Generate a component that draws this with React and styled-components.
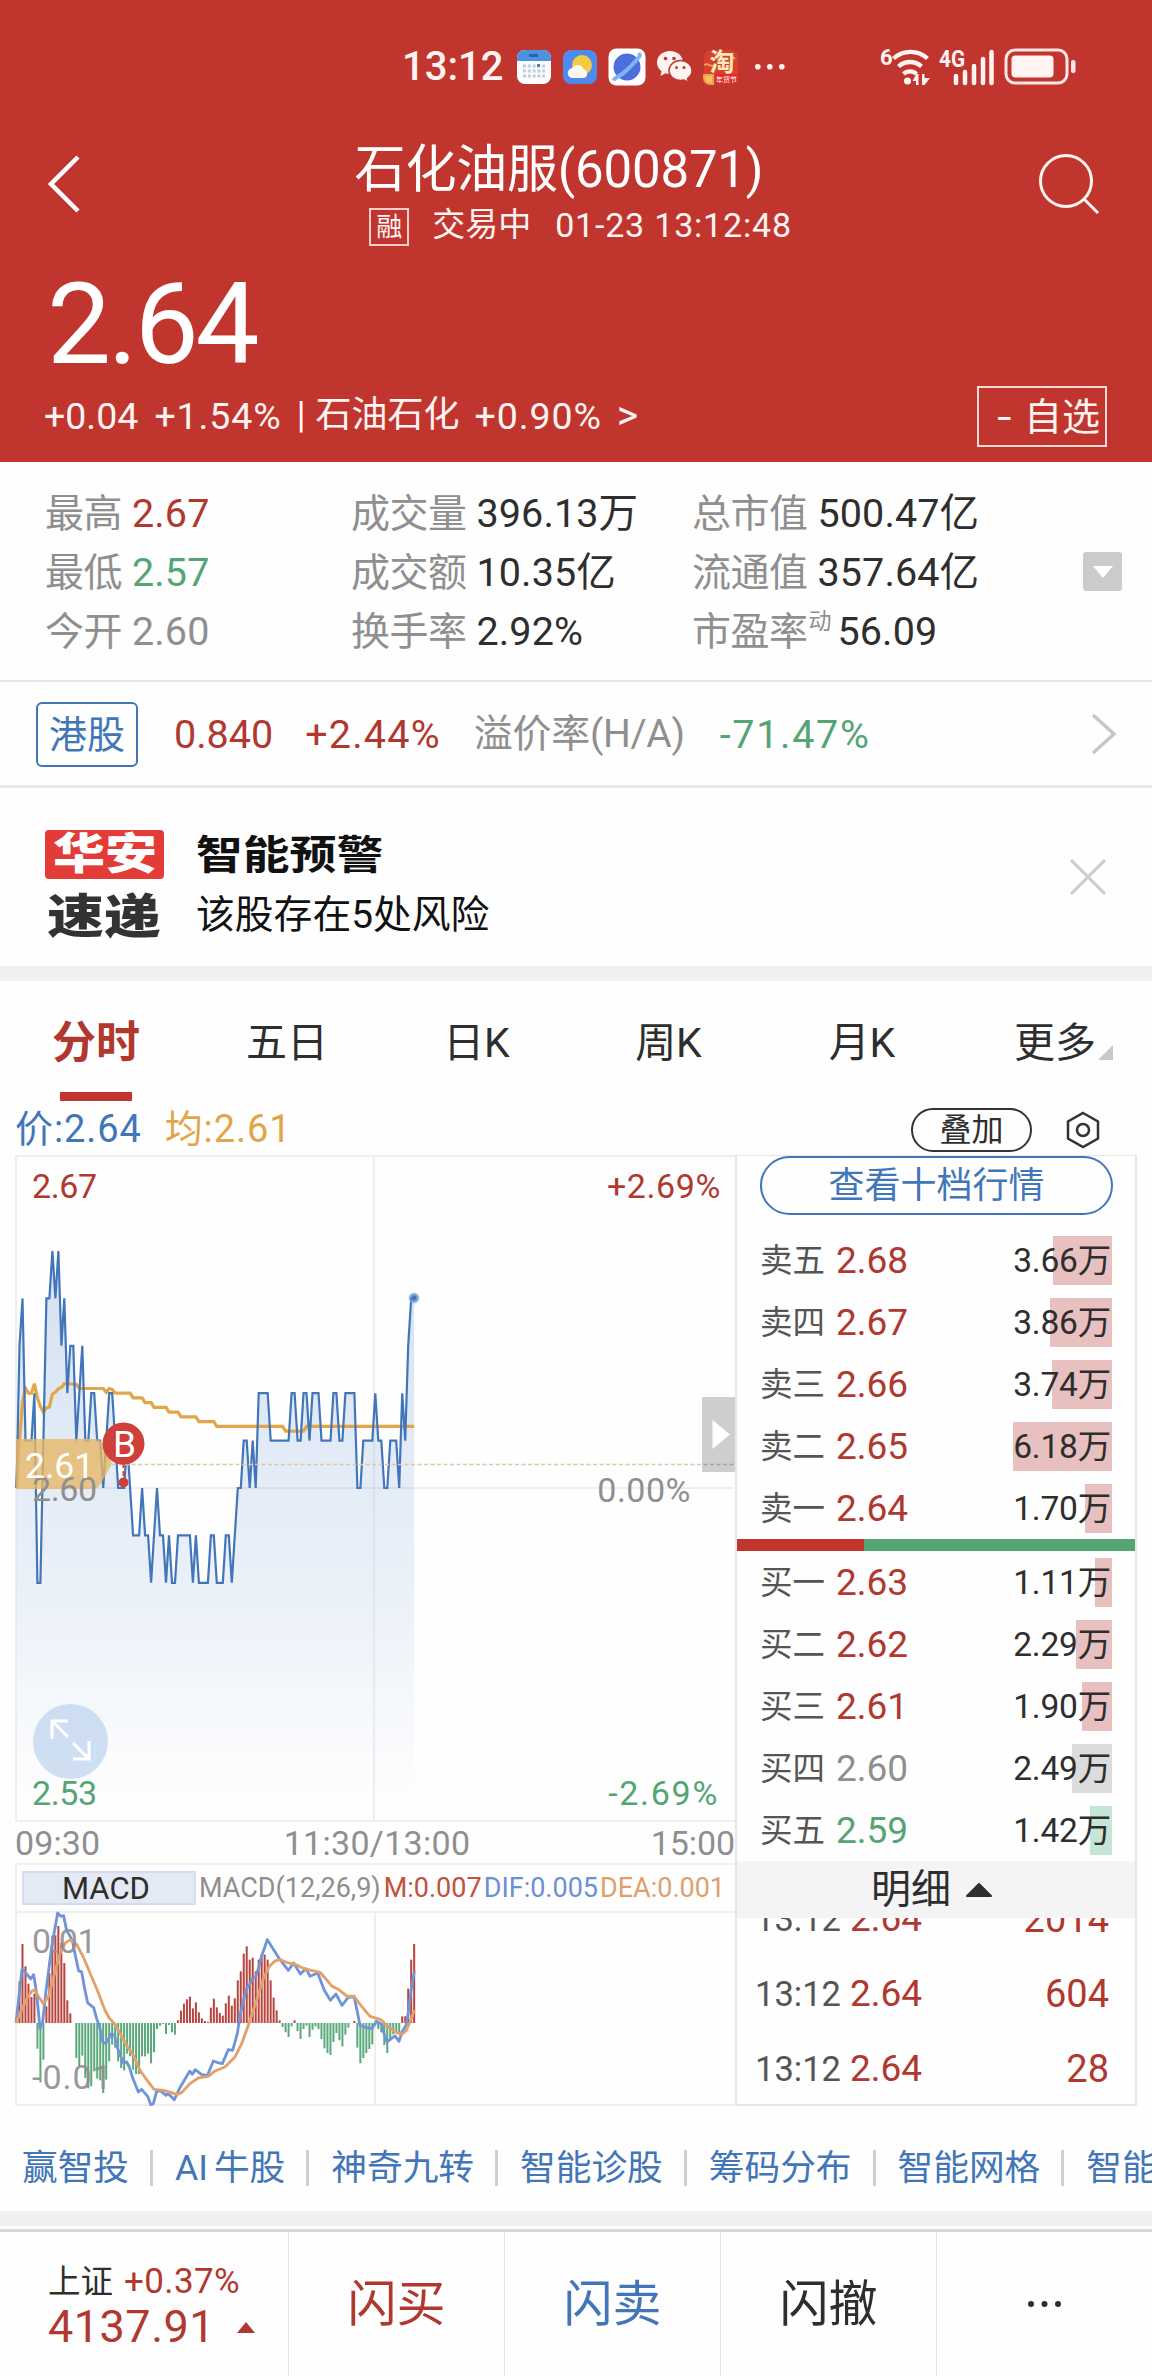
import React from 'react';
import styled, { createGlobalStyle } from 'styled-components';

const RED = '#c0362f';
const UP = '#b0382f';
const GREEN = '#54a474';
const BLUE = '#4276b8';
const GOLD = '#e2a548';
const GREY = '#8f8f8f';
const INK = '#2e2e2e';
const LINE = '#e6e6e6';

const Global = createGlobalStyle`
  * { box-sizing: border-box; }
  body { margin: 0; background: #fefefe; }
`;

const Screen = styled.div`
  width: 1152px;
  height: 2376px;
  overflow: hidden;
  display: flex;
  flex-direction: column;
  background: #fefefe;
  color: ${INK};
  font-family: Roboto, "Noto Sans CJK SC", sans-serif;
  white-space: nowrap;
  svg { display: block; flex: none; overflow: visible; }
`;

const T = styled.span`
  display: inline-block;
  flex: none;
  font-size: ${p => p.$s || 39}px;
  line-height: 1.2;
  color: ${p => p.$c || 'inherit'};
  letter-spacing: ${p => p.$ls || 0}px;
  font-weight: ${p => p.$w || 400};
  margin-left: ${p => p.$ml || 0}px;
`;

/* ---------- header ---------- */
const Header = styled.header`
  height: 462px;
  flex: none;
  background: ${RED};
  color: #fff4f2;
  display: flex;
  flex-direction: column;
`;
const StatusBar = styled.div`
  height: 132px;
  padding: 2px 76px 0 402px;
  display: flex;
  align-items: center;
`;
const AppIcons = styled.div`
  display: flex;
  align-items: center;
  gap: 10px;
  margin-left: 13px;
`;
const Signals = styled.div`
  display: flex;
  align-items: center;
  margin-left: auto;
  gap: 9px;
`;
const TitleBar = styled.div`
  height: 124px;
  padding: 0 52px 0 47px;
  display: flex;
  justify-content: space-between;
  align-items: flex-start;
`;
const BackBox = styled.div`padding-top: 23px;`;
const SearchBox = styled.div`padding-top: 21px;`;
const TitleBlock = styled.div`
  display: flex;
  flex-direction: column;
  align-items: center;
  padding-left: 15px;
`;
const TitleText = styled.div`
  font-size: 51px;
  line-height: 60px;
  padding-top: 8px;
  letter-spacing: -0.2px;
  color: #fff;
  margin-right: 15px;
`;
const SubTitle = styled.div`
  display: flex;
  align-items: center;
  height: 40px;
  margin-top: 5px;
  padding-left: 28px;
`;
const MarginTag = styled.span`
  width: 40px;
  height: 38px;
  border: 2px solid #f6cfcb;
  font-size: 26px;
  line-height: 34px;
  text-align: center;
  margin-right: 23px;
  margin-top: 4px;
`;
const BigPrice = styled.div`
  height: 118px;
  padding-left: 47px;
  padding-top: 11px;
  font-size: 114px;
  line-height: 114px;
  letter-spacing: -3.2px;
  color: #fff;
`;
const ChangeRow = styled.div`
  height: 88px;
  padding: 0 45px 0 44px;
  display: flex;
  align-items: center;
  margin-top: -2px;
`;
const WatchButton = styled.button`
  margin-left: auto;
  width: 130px;
  height: 61px;
  border: 2px solid #f6d9d6;
  border-radius: 0;
  background: none;
  color: inherit;
  font: 38px/1 Roboto, "Noto Sans CJK SC", sans-serif;
  display: flex;
  align-items: center;
  justify-content: flex-end;
  gap: 14px;
  padding: 2px 5px 0 0;
`;
const Dash = styled.span`
  display: inline-block;
  transform: scaleX(1.35);
`;

/* ---------- quote statistics ---------- */
const Stats = styled.section`
  height: 220px;
  flex: none;
  padding: 22px 30px 0 45px;
  border-bottom: 2px solid ${LINE};
  display: grid;
  grid-template-columns: 306px 341px 1fr 39px;
`;
const StatColumn = styled.div`
  display: flex;
  flex-direction: column;
`;
const Stat = styled.div`
  display: flex;
  height: 59px;
  align-items: center;
  gap: 10px;
  font-size: 39px;
  line-height: 48px;
  color: ${GREY};
`;
const StatLabel = styled.span`letter-spacing: -0.5px;`;
const Sup = styled.span`
  font-size: 23px;
  margin: -20px -4px 0 -9px;
`;
const StatValue = styled.span`
  font-size: 39.5px;
  letter-spacing: 0.1px;
  color: ${p => p.$c || INK};
`;
const Toggle = styled.div`
  width: 39px;
  height: 39px;
  margin-top: 68px;
  border-radius: 3px;
  background: #cbcbcb;
  display: grid;
  place-items: center;
`;

const HkRow = styled.section`
  height: 106px;
  flex: none;
  padding: 1px 35px 0 36px;
  border-bottom: 3px solid ${LINE};
  display: flex;
  align-items: center;
`;
const HkTag = styled.span`
  width: 102px;
  height: 65px;
  border: 2px solid ${BLUE};
  border-radius: 6px;
  color: ${BLUE};
  font-size: 38px;
  line-height: 63px;
  text-align: center;
`;
const HkText = styled(T)`padding-top: 1px;`;
const Push = styled.div`margin-left: auto;`;

/* ---------- alert ---------- */
const Alert = styled.section`
  height: 178px;
  flex: none;
  display: flex;
  padding: 42px 46px 0 45px;
`;
const AlertLogo = styled.div`
  width: 119px;
  display: flex;
  flex-direction: column;
  align-items: center;
`;
const LogoTop = styled.div`
  width: 119px;
  height: 49px;
  border-radius: 4px;
  background: #e23b38;
  color: #fff;
  display: grid;
  place-items: center;
  font-size: 46px;
  line-height: 49px;
  font-weight: 900;
`;
const LogoBottom = styled.div`
  color: #333;
  font-size: 48px;
  line-height: 60px;
  margin-top: 8px;
  font-weight: 900;
`;
const Wide = styled.span`
  display: inline-block;
  transform: scaleX(${p => p.$x}) scaleY(${p => p.$y || 1});
  transform-origin: ${p => p.$o || 'center'};
`;
const AlertText = styled.div`
  margin-left: 32px;
  display: flex;
  flex-direction: column;
  color: #111;
`;
const AlertTitle = styled.div`
  font-size: 40px;
  line-height: 50px;
  font-weight: 700;
  padding-top: 1px;
`;
const AlertBody = styled.div`
  font-size: 38.8px;
  line-height: 50px;
  margin-top: 9px;
`;
const CloseBox = styled.div`margin: 29px 0 0 auto;`;

const Band = styled.div`
  height: 15px;
  flex: none;
  background: #f0f0f0;
`;

/* ---------- tabs ---------- */
const Tabs = styled.nav`
  height: 120px;
  flex: none;
  display: grid;
  grid-template-columns: repeat(6, 192px);
`;
const Tab = styled.div`
  display: flex;
  flex-direction: column;
  align-items: center;
  font-size: ${p => (p.$on ? 44 : 41)}px;
  font-weight: ${p => (p.$on ? 700 : 400)};
  color: ${p => (p.$on ? UP : INK)};
  line-height: 60px;
  padding: 32px ${p => (p.$on ? 0 : p.$shift || 2)}px 0 0;
`;
const TabLabel = styled.span`
  display: flex;
  align-items: flex-end;
`;
const Underline = styled.i`
  width: 72px;
  height: 9px;
  margin-top: 19px;
  background: ${RED};
`;
const Corner = styled.i`
  margin: 0 -17px 13px 2px;
  border-left: 15px solid transparent;
  border-bottom: 15px solid #c8c8c8;
`;

/* ---------- chart area ---------- */
const Legend = styled.div`
  height: 54px;
  flex: none;
  padding: 3px 52px 0 15px;
  display: flex;
  align-items: center;
`;
const OverlayButton = styled.span`
  margin-left: auto;
  width: 121px;
  height: 44px;
  border: 2px solid #333;
  border-radius: 22px;
  font-size: 32px;
  line-height: 41px;
  text-align: center;
  margin-right: 34px;
`;
const Market = styled.section`
  height: 951px;
  flex: none;
  padding: 0 15px;
  display: grid;
  grid-template-columns: 720px 402px;
`;
const Charts = styled.div`
  display: flex;
  flex-direction: column;
`;
const Axis = styled.div`
  height: 40px;
  display: flex;
  align-items: center;
  justify-content: space-between;
  color: ${GREY};
`;
const MacdBar = styled.div`
  height: 48px;
  border-top: 2px solid #f0f0f0;
  border-left: 2px solid #f0f0f0;
  display: flex;
  align-items: center;
  padding-left: 5px;
`;
const MacdTag = styled.span`
  width: 174px;
  height: 34px;
  border: 2px solid #d2dcf5;
  background: #e4e9f4;
  font-size: 31px;
  line-height: 31px;
  text-align: center;
  padding-right: 6px;
`;

const Book = styled.div`
  height: 951px;
  border: 2px solid ${LINE};
  border-top-width: 1px;
  display: flex;
  flex-direction: column;
  overflow: hidden;
`;
const DepthButton = styled.div`
  flex: none;
  width: 353px;
  height: 59px;
  margin: 0 0 14px 23px;
  border: 2px solid ${BLUE};
  border-radius: 30px;
  color: ${BLUE};
  font-size: 36px;
  line-height: 57px;
  text-align: center;
`;
const BookRow = styled.div`
  flex: none;
  height: 62px;
  padding: 0 23px;
  display: flex;
  align-items: center;
`;
const RowText = styled(T)`padding-top: 2px;`;
const Volume = styled.span`
  margin-left: auto;
  height: 49px;
  padding-right: 1px;
  line-height: 49px;
  font-size: 33.5px;
  letter-spacing: -0.2px;
  background: linear-gradient(${p => p.$c}, ${p => p.$c}) right / ${p => p.$bar}px 100% no-repeat;
  min-width: 99px;
  text-align: right;
`;
const Split = styled.div`
  flex: none;
  height: 12px;
  background: linear-gradient(90deg, ${RED} 127px, ${GREEN} 127px);
`;
const DetailBar = styled.div`
  flex: none;
  height: 57px;
  background: #f4f4f4;
  display: flex;
  align-items: center;
  justify-content: center;
  gap: 14px;
  padding-right: 8px;
`;
const Trades = styled.div`
  flex: 1;
  overflow: hidden;
  display: flex;
  flex-direction: column;
  justify-content: flex-end;
`;
const Trade = styled.div`
  flex: none;
  height: 75px;
  padding: 0 26px 0 18px;
  display: flex;
  align-items: center;
  &:last-child { margin-bottom: -3px; }
`;

/* ---------- shortcuts and bottom bar ---------- */
const Shortcuts = styled.nav`
  height: 105px;
  flex: none;
  padding-top: 18px;
  padding-left: 22px;
  display: flex;
  align-items: center;
  overflow: hidden;
`;
const Shortcut = styled.span`
  flex: none;
  color: ${BLUE};
  font-size: 35.7px;
  line-height: 44px;
  word-spacing: -3px;
  display: flex;
  align-items: center;
  &:not(:last-child)::after {
    content: '';
    width: 3px;
    height: 36px;
    margin: 0 22px 0 21px;
    background: #cfcfcf;
  }
`;
const BottomBar = styled.footer`
  height: 147px;
  flex: none;
  margin-top: 3px;
  border-top: 3px solid #d5d5d5;
  display: grid;
  grid-template-columns: 289px 216px 216px 216px 215px;
`;
const Cell = styled.div`
  border-right: ${p => (p.$last ? 0 : 1)}px solid #e4e4e4;
  display: grid;
  place-items: center;
  font-size: 49px;
  line-height: 60px;
  padding: ${p => (p.$last ? 0 : 2)}px 0 0;
  color: ${p => p.$c || INK};
`;
const IndexCell = styled.div`
  border-right: 1px solid #e4e4e4;
  padding: 28px 0 0 48px;
`;
const IndexLine = styled.div`
  display: flex;
  align-items: center;
  height: ${p => p.$h}px;
`;

/* ---------- chart data: minute series ---------- */
const PRICES = [
  0, 3, 4, 1, 1, 1, 2, -2, -2, 1, 4, 4, 5, 4, 5, 3, 4, 2, 3, 3, 1, 2, 3, 1, 1, 2, 2, 1, 1, 0,
  1, 2, 2, 1, 0, 0, 0, 1, 0, -1, -1, -1, 0, -1, -1, -2, -1, 0, -1, -1, -2, -1, -2, -2, -1, -1, -1, -1, -1, -2,
  -1, -2, -2, -2, -2, -1, -1, -2, -2, -2, -1, -1, -2, -1, 0, 0, 1, 1, 0, 1, 0, 2, 2, 2, 2, 1, 1, 1, 1, 1,
  1, 1, 2, 2, 1, 1, 2, 2, 1, 2, 2, 2, 1, 1, 1, 1, 2, 2, 1, 1, 2, 2, 2, 2, 0, 0, 1, 1, 1, 1,
  2, 1, 1, 0, 0, 1, 1, 1, 0, 2, 1, 3, 4, 4,
];
const AVERAGE = [
  [0, 0], [1, 1], [2, 1.8], [3, 2.1], [4, 2], [5, 2], [6, 2.2], [7, 1.9], [8, 1.72], [9, 1.6], [10, 1.69], [11, 1.71],
  [12, 1.98], [13, 2.02], [14, 2.09], [15, 2.12], [16, 2.2], [20, 2.19], [21, 2.1], [29, 2.1], [30, 2.02], [31, 2.1],
  [32, 2.08], [33, 2], [38, 2], [39, 1.9], [42, 1.9], [43, 1.8], [45, 1.8], [46, 1.7], [50, 1.7], [51, 1.6], [54, 1.6],
  [55, 1.5], [60, 1.5], [61, 1.4], [66, 1.4], [67, 1.3], [89, 1.3], [90, 1.2], [96, 1.2], [97, 1.3], [133, 1.3],
];
const BARS = [
  0, 125, 237, 170, 118, 78, 88, -77, -178, -110, 50, 150, 262, 263, 291, 240, 180, 68, 29, 0,
  -105, -130, -98, -165, -196, -190, -145, -167, -172, -210, -170, -115, -65, -74, -115, -135, -142, -92, -100, -140,
  -153, -153, -100, -100, -92, -121, -88, -18, -8, -3, -33, -6, -28, -35, 8, 37, 58, 71, 79, 44,
  62, 32, 14, 6, 3, 46, 73, 47, 30, 22, 59, 82, 52, 74, 128, 155, 208, 230, 190, 196,
  155, 190, 205, 205, 190, 128, 76, 38, 8, -12, -28, -42, -10, 8, -24, -48, -18, -8, -42, -20,
  -10, -18, -48, -76, -90, -96, -57, -30, -52, -70, -35, -14, 0, 6, -74, -121, -105, -90, -78, -64,
  -8, -18, -28, -66, -90, -52, -34, -26, -30, 20, 20, 103, 190, 237,
];
const DIF = '48,398 66,237 79,250 92,266 101,253 110,310 120,415 128,395 137,310 155,170 173,68 182,78 191,76 200,122 209,135 218,155 227,200 236,242 245,245 254,295 263,338 281,352 290,385 299,410 308,455 317,460 335,430 344,436 353,475 370,518 380,515 388,530 397,560 415,605 425,597 443,618 452,643 460,640 469,606 480,600 498,615 505,610 523,628 541,590 569,543 577,552 586,538 604,552 622,556 640,512 650,516 667,520 685,478 698,480 712,430 721,370 739,295 748,285 757,265 766,262 775,235 784,200 802,148 838,205 865,240 881,218 901,251 918,235 930,258 953,248 973,300 991,330 1008,311 1026,345 1044,322 1062,318 1071,360 1080,405 1098,412 1116,415 1129,393 1145,402 1152,430 1161,455 1185,437 1197,453 1206,425 1218,405 1224,372 1233,300 1243,243';
const DEA = '48,398 66,355 84,318 95,303 104,298 115,318 130,340 145,320 165,245 180,190 195,160 204,152 213,150 230,163 250,200 270,248 292,300 315,360 328,384 345,402 380,465 400,495 420,540 445,575 462,597 490,600 515,607 530,613 545,607 570,580 595,563 625,558 645,542 675,530 705,500 725,460 745,405 770,330 790,265 808,228 825,212 840,208 865,218 890,224 915,236 960,246 975,263 995,287 1015,297 1040,317 1062,318 1085,348 1110,378 1143,388 1165,410 1190,427 1205,432 1218,422 1230,395 1243,360';

const px = i => 1.5 + i * 2.99;
const py = v => 333 - v * 47.4;
const pricePath = PRICES.map((v, i) => `${px(i).toFixed(1)},${py(v).toFixed(1)}`).join(' ');
const averagePath = AVERAGE.map(([i, v]) => `${px(i).toFixed(1)},${py(v).toFixed(1)}`).join(' ');

function PriceChart() {
  return (
    <svg width="720" height="668" viewBox="0 0 720 668" fontFamily="Roboto, sans-serif" fontSize="34">
      <defs>
        <linearGradient id="fill" x1="0" y1="100" x2="0" y2="650" gradientUnits="userSpaceOnUse">
          <stop offset="0" stopColor="#3c78c8" stopOpacity="0.21" />
          <stop offset="0.6" stopColor="#3c78c8" stopOpacity="0.1" />
          <stop offset="1" stopColor="#3c78c8" stopOpacity="0" />
        </linearGradient>
        <radialGradient id="glow">
          <stop offset="0.3" stopColor="#4276b8" />
          <stop offset="1" stopColor="#8fb8ee" stopOpacity="0.6" />
        </radialGradient>
      </defs>
      <path d="M1 667V1H720M359 1V666M1 333H718M1 666H720" fill="none" stroke="#efeff0" strokeWidth="2" />
      <polygon points={`${px(0)},660 ${pricePath} ${px(133)},660`} fill="url(#fill)" />
      <polyline points={averagePath} fill="none" stroke={GOLD} strokeWidth="3.2" />
      <polyline points={pricePath} fill="none" stroke={BLUE} strokeWidth="2.2" />
      <circle cx="399" cy="143" r="5.5" fill="url(#glow)" />
      <path d="M97 309.500H719" stroke="#dfc7a8" strokeWidth="1.5" strokeDasharray="4 2.5" />
      <path d="M1 284H80Q86 284 88 290L97 309L86 328Q83 334 77 334H1Z" fill="#e6b867" fillOpacity="0.8" />
      <text x="17" y="346" fill={GREY} letterSpacing="-.4">2.60</text>
      <text x="10" y="323" fill="#fff" fontSize="35.500">2.61</text>
      <path d="M108.500 300V322" stroke="#d0403a" strokeWidth="2" strokeDasharray="5 3" />
      <circle cx="108.500" cy="327.500" r="5" fill="#d0403a" />
      <circle cx="108.500" cy="288.500" r="21" fill="#d0403a" />
      <text x="109.500" y="302" fill="#fff" textAnchor="middle" fontSize="37">B</text>
      <text x="17" y="43" fill={UP} letterSpacing="-.4">2.67</text>
      <text x="706" y="43" fill={UP} textAnchor="end" letterSpacing=".6">+2.69%</text>
      <text x="676" y="347" fill={GREY} textAnchor="end" letterSpacing=".5">0.00%</text>
      <circle cx="55.500" cy="586.500" r="37.500" fill="#b9d0ec" fillOpacity="0.65" />
      <path d="M53 582L37 566M37 584V566H53M58 588L74 604M74 586V604H58" fill="none" stroke="#fff" strokeWidth="3" />
      <text x="17" y="650" fill={GREEN} letterSpacing="-.4">2.53</text>
      <text x="704" y="650" fill={GREEN} textAnchor="end" letterSpacing="1.700">-2.69%</text>
      <rect x="687" y="242" width="33" height="75" fill="#000" fillOpacity="0.19" />
      <path d="M697.500 265V294L715 279.500Z" fill="#fff" />
    </svg>
  );
}

function MacdChart() {
  return (
    <svg width="720" height="195" viewBox="0 0 720 195" fontFamily="Roboto, sans-serif" fontSize="34">
      <path d="M1 195V1H720M360 1V194M1 194H720" fill="none" stroke="#efeff0" strokeWidth="2" />
      {BARS.map((v, i) => (
        <rect
          key={i}
          x={px(i) - 1}
          y={v > 0 ? 112 - v / 3 : 112}
          width="2"
          height={Math.abs(v) / 3}
          fill={v > 0 ? '#b8443d' : '#5aa97a'}
        />
      ))}
      <g transform="translate(-15 -20.700) scale(.33333)" fill="none" strokeWidth="8.500" strokeLinejoin="round">
        <polyline points={DIF} stroke="#7094d8" />
        <polyline points={DEA} stroke="#e3a06a" />
      </g>
      <text x="17" y="42" fill={GREY} fillOpacity=".92" letterSpacing="-.6">0.01</text>
      <text x="17" y="178" fill={GREY} fillOpacity=".92" letterSpacing="1">-0.01</text>
    </svg>
  );
}

const CalendarIcon = () => (
  <svg width="36" height="36" viewBox="0 0 36 36">
    <rect x="1" y="1" width="34" height="34" rx="8" fill="#fafcff" />
    <path d="M1 12V9a8 8 0 0 1 8-8h18a8 8 0 0 1 8 8v3z" fill="#4b93e0" />
    <rect x="13" y="5" width="9" height="3" fill="#2c62a8" />
    <path d="M7 17h22M7 22h22M7 27h22" stroke="#c5cbd6" strokeWidth="3" strokeDasharray="3 1.800" />
    <rect x="21" y="15" width="3" height="3" fill="#3f84cf" />
  </svg>
);
const WeatherIcon = () => (
  <svg width="36" height="36" viewBox="0 0 36 36">
    <rect x="1" y="1" width="34" height="34" rx="8" fill="#4f8bec" />
    <circle cx="20" cy="16" r="10" fill="#f4cb42" />
    <path d="M11 29a5 5 0 0 1-.5-10 6 6 0 0 1 11 1.500 4.300 4.300 0 0 1 0 8.500z" fill="#fbf8f0" />
  </svg>
);
const PlanetIcon = () => (
  <svg width="38" height="38" viewBox="0 0 38 38">
    <rect x=".5" y=".5" width="37" height="37" rx="8" fill="#fff" />
    <circle cx="19" cy="19" r="13.500" fill="#4d6fdc" />
    <path d="M6.500 31C5 31 12 29 20 21S33 8 31.500 6.500" fill="none" stroke="#7fb4f3" strokeWidth="4" strokeLinecap="round" />
  </svg>
);
const WechatIcon = () => (
  <svg width="37" height="34" viewBox="0 0 37 34">
    <path d="M14 1C6.500 1 1 6 1 12.500c0 3.600 1.800 6.700 4.600 8.800L4.500 26l5-2.700c1.500.4 3 .6 4.500.6 7.500 0 13-5 13-11.400S21.500 1 14 1z" fill="#fff4f2" />
    <path d="M24.500 10.500c-6.600 0-11.500 4.500-11.500 10s4.900 10 11.500 10c1.300 0 2.500-.2 3.600-.5l4.400 2.500-1-4c2.700-1.900 4.500-4.700 4.500-8 0-5.500-4.900-10-11.500-10z" fill="#fff4f2" stroke={RED} strokeWidth="1.500" />
    <g fill={RED}><circle cx="9.500" cy="8.500" r="1.800" /><circle cx="18" cy="8.500" r="1.800" /><circle cx="20.500" cy="17.500" r="1.500" /><circle cx="28" cy="17.500" r="1.500" /></g>
  </svg>
);
const TaobaoIcon = () => (
  <svg width="36" height="36" viewBox="0 0 36 36" fontFamily="'Noto Sans CJK SC', sans-serif">
    <rect x="1" y="1" width="34" height="34" rx="7" fill="#d7402f" />
    <path d="M1 16c5-3 6 3 10 0M26 5l6 5M1 26h9v9H7a6 6 0 0 1-6-6z" stroke="#f0a050" strokeWidth="2" fill="#f3bf66" />
    <text x="19" y="22" fontSize="25" fontWeight="700" textAnchor="middle" fill="#fdebb8">淘</text>
    <rect x="12" y="25" width="23" height="10" rx="3" fill="#e02b2b" />
    <text x="23.500" y="33" fontSize="7" textAnchor="middle" fill="#fff">年货节</text>
  </svg>
);
const Dots = ({ r = 2.6, gap = 12, color = '#fff4f2' }) => (
  <svg width={gap * 2 + r * 2} height={r * 2}>
    {[0, 1, 2].map(i => <circle key={i} cx={r + gap * i} cy={r} r={r} fill={color} />)}
  </svg>
);
const WifiIcon = () => (
  <svg width="50" height="38" viewBox="0 0 50 38" fontFamily="Roboto, sans-serif">
    <text x="-1" y="17" fontSize="22" fontWeight="700" fill="#fff4f2">6</text>
    <g fill="none" stroke="#fff4f2" strokeWidth="4.300">
      <path d="M12.500 10.500a25 25 0 0 1 34 0" />
      <path d="M17.500 18.500a17 17 0 0 1 23 0" />
      <path d="M22.500 26a9.500 9.500 0 0 1 13 0" />
    </g>
    <circle cx="26.500" cy="33" r="3.500" fill="#fff4f2" />
    <path d="M31.500 33l4-7h2v11h-2.500v-4zM41 37V26h2.500v4H49l-5.500 7z" fill="#fff4f2" />
  </svg>
);
const CellIcon = () => (
  <svg width="55" height="38" viewBox="0 0 55 38" fontFamily="Roboto, sans-serif">
    <text x="-1" y="19" fontSize="23" fontWeight="700" fill="#fff4f2" textLength="26" lengthAdjust="spacingAndGlyphs">4G</text>
    <path d="M16 35V28M25 35V24M34 35V18M43 35V11M51.500 35V4" stroke="#fff4f2" strokeWidth="4.500" strokeLinecap="round" />
  </svg>
);
const BatteryIcon = () => (
  <svg width="72" height="38" viewBox="0 0 72 38">
    <rect x="2" y="2" width="61" height="33" rx="9" fill="none" stroke="#fce6e3" strokeWidth="3" />
    <rect x="7.500" y="7.500" width="42" height="22" rx="4" fill="#fff4f2" />
    <rect x="67" y="12" width="4.500" height="13" rx="2" fill="#fce6e3" />
  </svg>
);

const STATS = [
  [['最高', '2.67', UP], ['最低', '2.57', GREEN], ['今开', '2.60', GREY]],
  [['成交量', '396.13万'], ['成交额', '10.35亿'], ['换手率', '2.92%']],
  [['总市值', '500.47亿'], ['流通值', '357.64亿'], ['市盈率', '56.09', INK, '动']],
];
const PINK = '#e8c0c0';
const SELL = [
  ['卖五', '2.68', '3.66万', 59], ['卖四', '2.67', '3.86万', 62], ['卖三', '2.66', '3.74万', 60],
  ['卖二', '2.65', '6.18万', 99], ['卖一', '2.64', '1.70万', 27],
];
const BUY = [
  ['买一', '2.63', '1.11万', 17], ['买二', '2.62', '2.29万', 36], ['买三', '2.61', '1.90万', 30],
  ['买四', '2.60', '2.49万', 40, GREY, '#dcdcdc'], ['买五', '2.59', '1.42万', 22, GREEN, '#c5e6d4'],
];
const TRADES = ['2014', '604', '28'];
const SHORTCUTS = ['赢智投', 'AI 牛股', '神奇九转', '智能诊股', '筹码分布', '智能网格', '智能盯盘'];

const renderRow = ([label, price, vol, bar, color = UP, shade = PINK]) => (
  <BookRow key={label}>
    <RowText $s={32.5} $c="#555">{label}</RowText>
    <RowText $s={37} $c={color} $ml={11}>{price}</RowText>
    <Volume $bar={bar} $c={shade}>{vol}</Volume>
  </BookRow>
);

export default function App() {
  return (
    <Screen>
      <Global />
      <Header>
        <StatusBar>
          <T $s={40} $w={500} $ls={0}>13:12</T>
          <AppIcons>
            <CalendarIcon /><WeatherIcon /><PlanetIcon /><WechatIcon /><TaobaoIcon />
          </AppIcons>
          <T $ml={16}><Dots r={2.8} /></T>
          <Signals><WifiIcon /><CellIcon /><BatteryIcon /></Signals>
        </StatusBar>
        <TitleBar>
          <BackBox>
            <svg width="33" height="58" viewBox="0 0 33 58"><path d="M31 2L4 29L31 56" fill="none" stroke="#fff" strokeWidth="4.500" /></svg>
          </BackBox>
          <TitleBlock>
            <TitleText>石化油服(600871)</TitleText>
            <SubTitle>
              <MarginTag>融</MarginTag>
              <T $s={33}>交易中</T>
              <T $s={34} $ml={24} $ls={0.8}>01-23 13:12:48</T>
            </SubTitle>
          </TitleBlock>
          <SearchBox>
            <svg width="62" height="62" viewBox="0 0 62 62" fill="none" stroke="#fff4f2" strokeWidth="3">
              <circle cx="28" cy="28" r="25.500" /><path d="M46 46L60 60" />
            </svg>
          </SearchBox>
        </TitleBar>
        <BigPrice>2.64</BigPrice>
        <ChangeRow>
          <T $s={37.5} $ls={0}>+0.04</T>
          <T $s={37.5} $ls={0.9} $ml={16}>+1.54%</T>
          <T $s={36} $ml={15}>|</T>
          <T $s={36} $ml={10}>石油石化</T>
          <T $s={37.5} $ls={0.9} $ml={15}>+0.90%</T>
          <T $s={41} $ml={15}>&gt;</T>
          <WatchButton><Dash>-</Dash><span>自选</span></WatchButton>
        </ChangeRow>
      </Header>

      <Stats>
        {STATS.map((col, i) => (
          <StatColumn key={i}>
            {col.map(([label, value, color, sup]) => (
              <Stat key={label}>
                <StatLabel>{label}</StatLabel>
                {sup && <Sup>{sup}</Sup>}
                <StatValue $c={color}>{value}</StatValue>
              </Stat>
            ))}
          </StatColumn>
        ))}
        <Toggle>
          <svg width="20" height="12"><path d="M0 0H20L10 12Z" fill="#fff" /></svg>
        </Toggle>
      </Stats>

      <HkRow>
        <HkTag>港股</HkTag>
        <HkText $s={39.5} $c={UP} $ml={36}>0.840</HkText>
        <HkText $s={39.5} $c={UP} $ml={32} $ls={1.2}>+2.44%</HkText>
        <HkText $s={39} $c={GREY} $ml={33} $ls={-0.3}>溢价率(H/A)</HkText>
        <HkText $s={39.5} $c={GREEN} $ml={35} $ls={1.7}>-71.47%</HkText>
        <Push>
          <svg width="26" height="42" viewBox="0 0 26 42"><path d="M2 2L23 21L2 40" fill="none" stroke="#c6c6cc" strokeWidth="3.500" /></svg>
        </Push>
      </HkRow>

      <Alert>
        <AlertLogo>
          <LogoTop><Wide $x={1.13} $y={0.95}>华安</Wide></LogoTop>
          <LogoBottom><Wide $x={1.18} $y={0.97}>速递</Wide></LogoBottom>
        </AlertLogo>
        <AlertText>
          <AlertTitle><Wide $x={1.17} $o="left">智能预警</Wide></AlertTitle>
          <AlertBody>该股存在5处风险</AlertBody>
        </AlertText>
        <CloseBox>
          <svg width="36" height="36" viewBox="0 0 36 36"><path d="M1 1L35 35M35 1L1 35" stroke="#cbcbcb" strokeWidth="3" /></svg>
        </CloseBox>
      </Alert>

      <Band />

      <Tabs>
        <Tab $on>分时<Underline /></Tab>
        <Tab>五日</Tab>
        <Tab $shift={7}>日K</Tab>
        <Tab $shift={7}>周K</Tab>
        <Tab $shift={4}>月K</Tab>
        <Tab><TabLabel>更多<Corner /></TabLabel></Tab>
      </Tabs>

      <Legend>
        <T $s={38} $c={BLUE} $ls={0.9}>价:2.64</T>
        <T $s={38} $c={GOLD} $ls={0.9} $ml={23}>均:2.61</T>
        <OverlayButton>叠加</OverlayButton>
        <svg width="34" height="38" viewBox="0 0 34 38" fill="none" stroke="#333" strokeWidth="2.500">
          <path d="M17 2L32 10.500V27.500L17 36L2 27.500V10.500Z" /><circle cx="17" cy="19" r="6" />
        </svg>
      </Legend>

      <Market>
        <Charts>
          <PriceChart />
          <Axis>
            <T $s={34} $ls={0.1}>09:30</T>
            <T $s={34} $ls={0.3} $ml={3}>11:30/13:00</T>
            <T $s={34} $ls={-0.1}>15:00</T>
          </Axis>
          <MacdBar>
            <MacdTag>MACD</MacdTag>
            <T $s={27} $c={GREY} $ml={3}>MACD(12,26,9)</T>
            <T $s={27} $c="#c2513d" $ml={3}>M:0.007</T>
            <T $s={27} $c="#6c90d4" $ml={2}>DIF:0.005</T>
            <T $s={27} $c="#dfa06c" $ml={2}>DEA:0.001</T>
          </MacdBar>
          <MacdChart />
        </Charts>
        <Book>
          <DepthButton>查看十档行情</DepthButton>
          {SELL.map(renderRow)}
          <Split />
          {BUY.map(renderRow)}
          <DetailBar>
            <T $s={40}>明细</T>
            <svg width="28" height="16" viewBox="0 0 28 16"><path d="M14 2L26 14H2Z" fill="#2e2e2e" stroke="#2e2e2e" strokeWidth="2" strokeLinejoin="round" /></svg>
          </DetailBar>
          <Trades>
            {TRADES.map(qty => (
              <Trade key={qty}>
                <T $s={34.5} $c="#555">13:12</T>
                <T $s={37} $c={UP} $ml={9}>2.64</T>
                <Push><T $s={38} $c={UP}>{qty}</T></Push>
              </Trade>
            ))}
          </Trades>
        </Book>
      </Market>

      <Shortcuts>
        {SHORTCUTS.map(s => <Shortcut key={s}>{s}</Shortcut>)}
      </Shortcuts>

      <Band />

      <BottomBar>
        <IndexCell>
          <IndexLine $h={44}>
            <T $s={32.5}>上证</T>
            <T $s={35} $c={UP} $ml={11} $ls={0.4}>+0.37%</T>
          </IndexLine>
          <IndexLine $h={46}>
            <T $s={45} $c={UP} $ls={0.5}>4137.91</T>
            <T $ml={22}><svg width="18" height="11"><path d="M9 0L18 11H0Z" fill={UP} /></svg></T>
          </IndexLine>
        </IndexCell>
        <Cell $c={UP}>闪买</Cell>
        <Cell $c={BLUE}>闪卖</Cell>
        <Cell>闪撤</Cell>
        <Cell $last><Dots r={3} gap={13.5} color="#2e2e2e" /></Cell>
      </BottomBar>
    </Screen>
  );
}
